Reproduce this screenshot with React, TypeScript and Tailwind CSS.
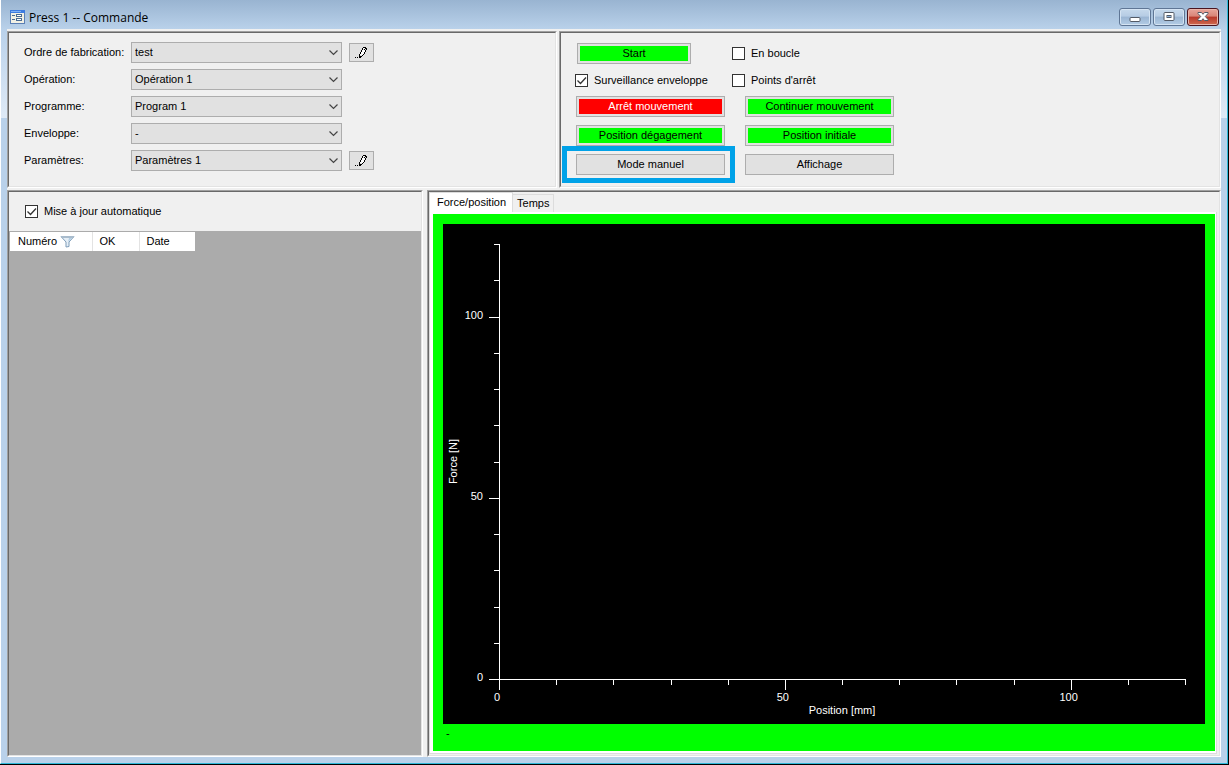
import { useState } from 'react'
import type { ReactNode } from 'react'
import clsx from 'clsx'

const FIELDS = [
  { id: 'order', label: 'Ordre de fabrication:', value: 'test', editable: true },
  { id: 'operation', label: 'Opération:', value: 'Opération 1', editable: false },
  { id: 'program', label: 'Programme:', value: 'Program 1', editable: false },
  { id: 'envelope', label: 'Enveloppe:', value: '-', editable: false },
  { id: 'params', label: 'Paramètres:', value: 'Paramètres 1', editable: true },
]

const TICKS = Array.from({ length: 13 }, (_, i) => i * 10)
const AXIS_MAX = 120

function FormIcon() {
  return (
    <svg width="15" height="14" viewBox="0 0 15 14" shapeRendering="crispEdges" aria-hidden="true">
      <rect width="15" height="14" fill="#5b7fb5" />
      <rect x="1" y="3" width="13" height="10" fill="#f2f0e4" />
      <rect x="0" y="0" width="15" height="3" fill="#3d7be0" />
      <rect x="1" y="1" width="10" height="1" fill="#7fb0f5" />
      <rect x="2" y="5" width="3" height="1" fill="#4a6a92" />
      <rect x="2" y="9" width="3" height="1" fill="#4a6a92" />
      <rect x="6" y="4" width="6" height="3" fill="#4a6a92" />
      <rect x="7" y="5" width="4" height="1" fill="#fff" />
      <rect x="6" y="8" width="6" height="3" fill="#4a6a92" />
      <rect x="7" y="9" width="4" height="1" fill="#fff" />
    </svg>
  )
}

function PencilIcon() {
  return (
    <svg width="13" height="13" viewBox="0 0 13 13" shapeRendering="crispEdges" aria-hidden="true">
      <path
        d="M8 1h3v1h-3zM7 2h1v2h-1zM11 2h1v2h-1zM10 2h1v1h-1zM6 4h1v2h-1zM10 4h1v2h-1zM9 3h1v1h-1zM5 6h1v2h-1zM9 6h1v2h-1zM4 8h1v4h-1zM8 8h1v1h-1zM7 9h1v1h-1zM6 10h1v1h-1zM5 11h1v1h-1zM5 10h1v1h-1zM0 11h1v1h-1zM2 11h1v1h-1z"
        fill="#000"
      />
      <path d="M8 2h2v1h-2zM7 4h3v2h-3zM6 6h3v2h-3zM5 8h3v1h-3z" fill="#fff" />
    </svg>
  )
}

function FunnelIcon() {
  return (
    <svg width="15" height="13" viewBox="0 0 15 13" aria-hidden="true">
      <path d="M1 1.5h13L9 7v4.5L6 12V7z" fill="#e6eff7" stroke="#7f9db9" />
      <path d="M1 1h13v2H1z" fill="#a9bccd" />
      <path d="M8 7l4-4H9z" fill="#b4cfe4" />
    </svg>
  )
}

type WindowButtonProps = { label: string; danger?: boolean; children: ReactNode }

function WindowButton({ label, danger, children }: WindowButtonProps) {
  return (
    <button
      type="button"
      aria-label={label}
      className={clsx(
        'flex h-[18px] w-8 items-center justify-center rounded-[3px] border',
        danger
          ? 'border-[#4a1520] bg-[linear-gradient(#e8a59b,#d98577_45%,#b8382a_50%,#cf6a50)] shadow-[inset_0_0_0_1px_#eab5aa]'
          : 'border-[#5f7695] bg-[linear-gradient(#c6d9ec,#b6cce4_45%,#9ab5d3_50%,#b3cce5)] shadow-[inset_0_0_0_1px_#d5e4f3]'
      )}
    >
      {children}
    </button>
  )
}

function TitleBar() {
  return (
    <header className="flex h-[29px] items-center bg-linear-to-b from-[#99b4d1] to-[#b9d1ea] pl-[9px] pr-2 pt-[5px]">
      <FormIcon />
      <h1 className="ml-1 flex-1 pt-0.5 font-['Open_Sans',sans-serif] text-[12px] leading-4">Press 1 -- Commande</h1>
      <div className="flex gap-0.5">
        <WindowButton label="Réduire">
          <svg width="12" height="12" aria-hidden="true">
            <rect x="1" y="6.5" width="10" height="4" rx="1" fill="#fff" stroke="#535a66" />
          </svg>
        </WindowButton>
        <WindowButton label="Agrandir">
          <svg width="12" height="12" aria-hidden="true">
            <rect x="1" y="1.5" width="10" height="8" rx="1" fill="#fff" stroke="#535a66" />
            <rect x="4" y="4.5" width="4" height="2" fill="#8fb4dc" stroke="#535a66" />
          </svg>
        </WindowButton>
        <WindowButton label="Fermer" danger>
          <svg width="12" height="12" viewBox="0 0 12 12" aria-hidden="true">
            <path
              d="M1 1.500h3.500L6 3.300 7.500 1.500H11v1L8.300 5.500 11 8.500v1H7.500L6 7.700 4.500 9.500H1V8.500l2.700-3L1 2.500z"
              fill="#fff"
              stroke="#535a66"
            />
          </svg>
        </WindowButton>
      </div>
    </header>
  )
}

function Panel({ className, children }: { className?: string; children: ReactNode }) {
  return (
    <section className={clsx('border border-t-[#a0a0a0] border-l-[#a0a0a0] border-r-white border-b-white', className)}>
      <div className="flex flex-1 flex-col border border-t-[#696969] border-l-[#696969] border-r-[#e3e3e3] border-b-[#e3e3e3]">
        {children}
      </div>
    </section>
  )
}

function CheckBox({ label, defaultChecked }: { label: string; defaultChecked?: boolean }) {
  return (
    <label className="flex items-center gap-1.5">
      <span className="grid">
        <input
          type="checkbox"
          defaultChecked={defaultChecked}
          className="peer col-start-1 row-start-1 size-[13px] appearance-none border border-[#333333] bg-white"
        />
        <svg
          viewBox="0 0 13 13"
          className="pointer-events-none invisible col-start-1 row-start-1 size-[13px] peer-checked:visible"
          aria-hidden="true"
        >
          <path d="M2.500 6.500l3 3 5.500-6" fill="none" stroke="#333" strokeWidth="1.300" />
        </svg>
      </span>
      {label}
    </label>
  )
}

function SettingsForm() {
  return (
    <form className="flex flex-col gap-1.5 pl-[15px] pt-[9px]">
      {FIELDS.map((f) => (
        <div key={f.id} className="flex h-[21px] items-center">
          <label htmlFor={f.id} className="w-[107px]">
            {f.label}
          </label>
          <div className="grid w-[211px] items-center">
            <select
              id={f.id}
              className="col-start-1 row-start-1 h-[21px] appearance-none border border-[#adadad] bg-[#e1e1e1] pl-[3px]"
            >
              <option>{f.value}</option>
            </select>
            <svg
              width="9"
              height="6"
              className="pointer-events-none col-start-1 row-start-1 mr-1 justify-self-end"
              aria-hidden="true"
            >
              <path d="M0.500 0.500l4 4 4-4" fill="none" stroke="#444" strokeWidth="1.200" />
            </svg>
          </div>
          {f.editable && (
            <button
              type="button"
              aria-label="Modifier"
              className="ml-[7px] flex h-[19px] w-[25px] items-center justify-center border border-[#adadad] bg-[#e1e1e1]"
            >
              <PencilIcon />
            </button>
          )}
        </div>
      ))}
    </form>
  )
}

type Tone = 'go' | 'stop' | 'plain'

const TONES: Record<Tone, string> = {
  go: 'bg-[#00ff00]',
  stop: 'bg-[#ff0000] text-white',
  plain: '',
}

function CommandButton({ tone = 'go', children }: { tone?: Tone; children: ReactNode }) {
  return (
    <button type="button" className="h-[21px] w-full border border-[#adadad] bg-[#e1e1e1] p-0.5">
      <span className={clsx('block leading-[15px]', TONES[tone])}>{children}</span>
    </button>
  )
}

function Commands() {
  return (
    <div className="flex flex-col gap-1.5 pl-3.5 pt-2.5">
      <div className="grid grid-cols-[157px_auto] grid-rows-[21px_20px] items-center justify-start gap-y-1.5">
        <div className="w-[116px] pl-0.5">
          <CommandButton>Start</CommandButton>
        </div>
        <CheckBox label="En boucle" />
        <CheckBox label="Surveillance enveloppe" defaultChecked />
        <CheckBox label="Points d'arrêt" />
      </div>
      <div className="grid grid-cols-[149px_149px] gap-x-5 gap-y-2 pl-px">
        <CommandButton tone="stop">Arrêt mouvement</CommandButton>
        <CommandButton>Continuer mouvement</CommandButton>
        <CommandButton>Position dégagement</CommandButton>
        <CommandButton>Position initiale</CommandButton>
        <div className="relative">
          <CommandButton tone="plain">Mode manuel</CommandButton>
          <div className="pointer-events-none absolute -bottom-2 -left-3.5 -right-2.5 -top-2 border-[5px] border-[#00a2e8]" />
        </div>
        <CommandButton tone="plain">Affichage</CommandButton>
      </div>
    </div>
  )
}

function Results() {
  return (
    <>
      <div className="flex h-[39px] items-center pl-4">
        <CheckBox label="Mise à jour automatique" defaultChecked />
      </div>
      <div className="flex-1 bg-[#ababab] pl-px pt-px">
        <table className="w-[185px] table-fixed bg-white text-left">
          <thead>
            <tr className="h-[19px]">
              <th className="w-[82px] border-r border-[#e3e3e3] pl-2 font-normal">
                <span className="flex items-center gap-[3px]">
                  Numéro
                  <FunnelIcon />
                </span>
              </th>
              <th className="w-[47px] border-r border-[#e3e3e3] pl-[7px] font-normal">OK</th>
              <th className="pl-[7px] font-normal">Date</th>
            </tr>
          </thead>
        </table>
      </div>
    </>
  )
}

function Chart() {
  return (
    <div className="flex flex-1 bg-black pb-[45px] pl-14 pr-5 pt-5">
      <svg
        className="h-auto min-h-0 flex-1 overflow-visible fill-white text-[11px]"
        role="img"
        aria-label="Force [N] / Position [mm]"
      >
        <g shapeRendering="crispEdges">
          <rect width="1" height="100%" />
          <rect y="100%" width="100%" height="1" />
        </g>
        {TICKS.map((v) => {
          const major = v % 50 === 0
          const pct = (v / AXIS_MAX) * 100
          const len = major ? 11 : 6
          return (
            <g key={v}>
              <svg x={`${pct}%`} y="100%" className="overflow-visible">
                <rect width="1" height={len} shapeRendering="crispEdges" />
                {major && (
                  <text x="-2" y="22" textAnchor="middle">
                    {v}
                  </text>
                )}
              </svg>
              <svg y={`${100 - pct}%`} className="overflow-visible">
                <rect x={1 - len} width={len} height="1" shapeRendering="crispEdges" />
                {major && (
                  <text x="-16" y="2" textAnchor="end">
                    {v}
                  </text>
                )}
              </svg>
            </g>
          )
        })}
        <svg y="50%" className="overflow-visible">
          <text x="0" y="-42" transform="rotate(-90)" textAnchor="middle">
            Force [N]
          </text>
        </svg>
        <svg x="50%" y="100%" className="overflow-visible">
          <text y="35" textAnchor="middle">
            Position [mm]
          </text>
        </svg>
      </svg>
    </div>
  )
}

function ChartTabs() {
  const [tab, setTab] = useState('force')
  const tabs = [
    { id: 'force', label: 'Force/position' },
    { id: 'time', label: 'Temps' },
  ]

  return (
    <div className="flex flex-1 flex-col pb-px pr-0.5">
      <div role="tablist" className="flex h-5 items-end">
        {tabs.map((t) => (
          <button
            key={t.id}
            type="button"
            role="tab"
            aria-selected={tab === t.id}
            onClick={() => setTab(t.id)}
            className={clsx(
              'border border-b-0 border-[#dcdcdc]',
              tab === t.id ? 'h-5 bg-white pl-[7px] pr-1.5' : 'h-[18px] border-l-0 bg-[#f0f0f0] pl-1 pr-[3px]'
            )}
          >
            {t.label}
          </button>
        ))}
      </div>
      <div className="flex flex-1 flex-col border border-t-0 border-[#dcdcdc] bg-white pb-0.5 pl-[3px] pr-px pt-0.5">
        <div className="flex flex-1 flex-col bg-[#00ff00] px-2.5 pt-2.5">
          <Chart />
          <p className="h-[27px] pl-[3px] pt-0.5">-</p>
        </div>
      </div>
    </div>
  )
}

export default function App() {
  return (
    <div className="flex min-h-screen bg-black pb-px pr-px font-['Liberation_Sans',Arial,sans-serif] text-[11px] leading-[15px] text-black">
      <div className="flex flex-1 flex-col border-b border-l border-r border-b-[#2fb8d8] border-l-white border-r-[#2fb8d8] bg-[#b9d1ea]">
        <TitleBar />
        <div className="flex flex-1 flex-col bg-[linear-gradient(#b9d1ea,#dfeaf6_89px,#b9d1ea_89px)] px-1.5 pb-1.5">
          <main className="flex flex-1 flex-col gap-0.5 bg-[#f0f0f0] pt-0.5">
            <div className="flex h-[157px] gap-0.5">
              <Panel className="flex w-[550px]">
                <SettingsForm />
              </Panel>
              <Panel className="flex flex-1">
                <Commands />
              </Panel>
            </div>
            <div className="flex flex-1 gap-1">
              <Panel className="flex w-[416px]">
                <Results />
              </Panel>
              <Panel className="flex flex-1">
                <ChartTabs />
              </Panel>
            </div>
          </main>
        </div>
      </div>
    </div>
  )
}
